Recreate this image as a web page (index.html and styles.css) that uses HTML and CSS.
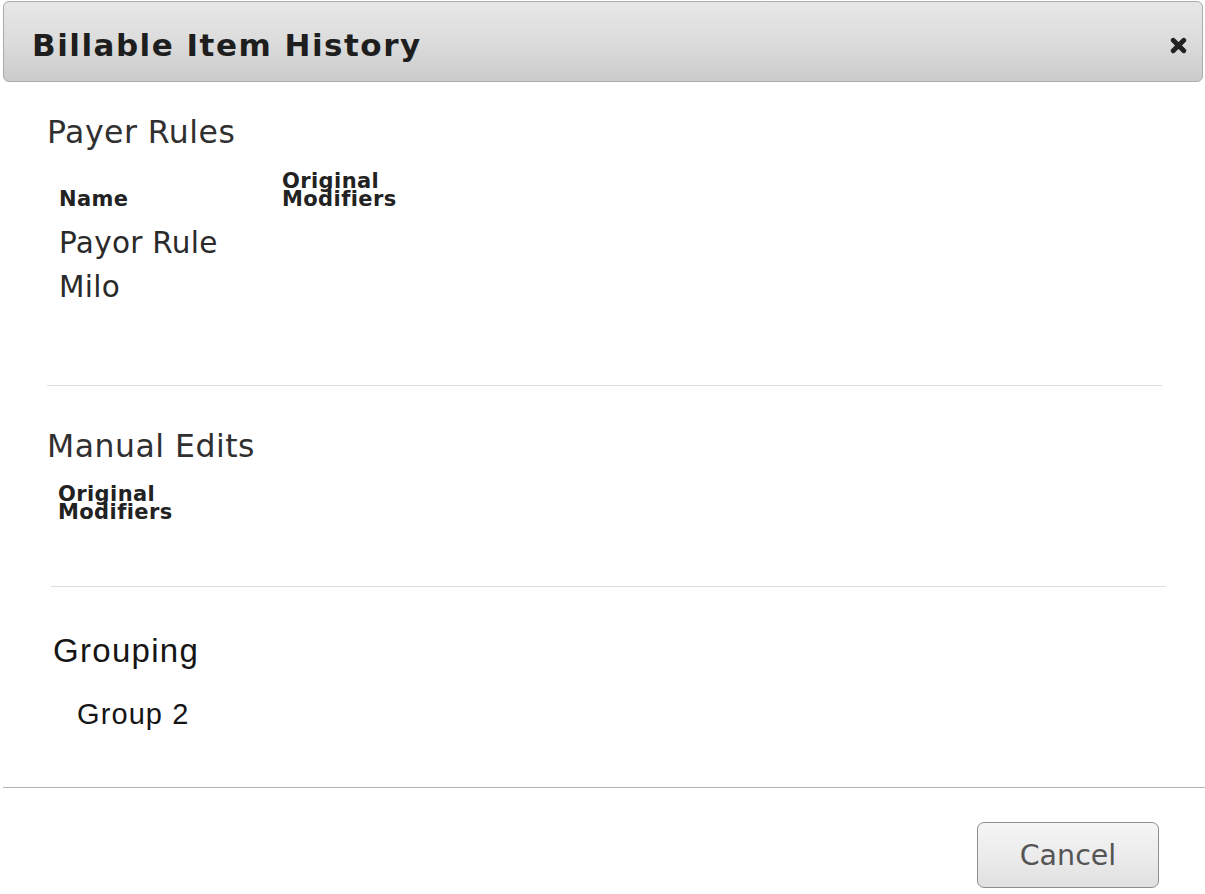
FILE: index.html
```html
<!DOCTYPE html>
<html lang="en">
<head>
<meta charset="utf-8">
<title>Billable Item History</title>
<link rel="stylesheet" href="styles.css">
</head>
<body>
<div class="modal">
  <div class="modal-header">
    <h1 class="modal-title">Billable Item History</h1>
    <button class="close-btn" type="button" aria-label="Close">
      <svg width="17" height="17" viewBox="0 0 17 17" aria-hidden="true">
        <path d="M3.2 3.2 L13.8 13.8 M13.8 3.2 L3.2 13.8" stroke="#222" stroke-width="4.8" stroke-linecap="round" fill="none"/>
      </svg>
    </button>
  </div>
  <div class="modal-body">
    <section class="section">
      <h2 class="section-title">Payer Rules</h2>
      <table class="history-table payer-table">
        <colgroup><col class="col-name"><col class="col-mod"></colgroup>
        <thead>
          <tr><th>Name</th><th>Original Modifiers</th></tr>
        </thead>
        <tbody>
          <tr><td>Payor Rule Milo</td><td></td></tr>
        </tbody>
      </table>
    </section>
    <div class="divider divider-first"></div>
    <section class="section">
      <h2 class="section-title manual-title">Manual Edits</h2>
      <table class="history-table manual-table">
        <colgroup><col class="col-mod"></colgroup>
        <thead>
          <tr><th>Original Modifiers</th></tr>
        </thead>
      </table>
    </section>
    <div class="divider divider-second"></div>
    <section class="section grouping">
      <h3 class="grouping-title">Grouping</h3>
      <div class="group-value">Group 2</div>
    </section>
  </div>
  <div class="modal-footer">
    <button class="btn" type="button">Cancel</button>
  </div>
</div>
</body>
</html>
```

FILE: styles.css
```css
* {
  box-sizing: border-box;
}

html, body {
  margin: 0;
  padding: 0;
  background: #ffffff;
}

body {
  font-family: "DejaVu Sans", Verdana, sans-serif;
  color: #2a2a2a;
  overflow: hidden;
}

.modal {
  margin: 1px 0 0 3px;
  width: 1202px;
  display: flex;
  flex-direction: column;
}

.modal-header {
  height: 81px;
  margin-right: 2px;
  border: 1px solid #ababab;
  border-radius: 6px;
  background: linear-gradient(to bottom, #e7e7e7 0%, #dcdcdc 50%, #cbcbcb 100%);
  display: flex;
  align-items: flex-start;
  justify-content: space-between;
  padding: 0 15px 0 28px;
}

.modal-title {
  margin: 25px 0 0 0;
  font-size: 31px;
  line-height: 36px;
  font-weight: bold;
  letter-spacing: 1.5px;
  color: #1e1e1e;
}

.close-btn {
  margin-top: 35px;
  padding: 0;
  border: 0;
  background: transparent;
  width: 17px;
  height: 17px;
  display: block;
  cursor: pointer;
}

.close-btn svg {
  display: block;
}

.modal-body {
  display: flex;
  flex-direction: column;
}

.section {
  display: flex;
  flex-direction: column;
}

.section-title {
  margin: 31px 0 0 44px;
  font-size: 31.5px;
  line-height: 38px;
  font-weight: normal;
  letter-spacing: 0.5px;
  color: #303030;
}

.manual-title {
  margin-top: 41px;
}

.history-table {
  border-collapse: collapse;
  table-layout: fixed;
  margin-top: 21px;
}

.payer-table {
  margin-left: 56px;
  width: 353px;
}

.manual-table {
  margin-left: 55px;
  margin-top: 20px;
  width: 130px;
}

.col-name {
  width: 223px;
}

.col-mod {
  width: 130px;
}

.history-table th {
  padding: 0;
  text-align: left;
  vertical-align: bottom;
  font-size: 21px;
  line-height: 18px;
  font-weight: bold;
  letter-spacing: 0.4px;
  color: #222;
}

.payer-table thead tr {
  height: 36px;
}

.history-table td {
  padding: 13px 0 0 0;
  vertical-align: top;
  font-size: 29.5px;
  line-height: 44px;
  letter-spacing: 0.3px;
  color: #2a2a2a;
}

.divider {
  height: 0;
  border-top: 1px solid #dedede;
}

.divider-first {
  margin: 76px 43px 0 44px;
}

.divider-second {
  margin: 65px 39px 0 48px;
}

.grouping {
  font-family: "Liberation Sans", Arial, sans-serif;
  color: #151515;
}

.grouping-title {
  margin: 45px 0 0 50px;
  font-size: 33px;
  line-height: 38px;
  font-weight: normal;
  letter-spacing: 1.3px;
}

.group-value {
  margin: 27px 0 0 74px;
  font-size: 29px;
  line-height: 34px;
  letter-spacing: 1.1px;
}

.modal-footer {
  margin-top: 56px;
  border-top: 1px solid #b3b3b3;
  padding: 34px 46px 0 0;
  display: flex;
  justify-content: flex-end;
}

.btn {
  width: 182px;
  height: 66px;
  border: 1px solid #8e8e8e;
  border-radius: 7px;
  background: linear-gradient(to bottom, #f5f5f5 0%, #ececec 50%, #e0e0e0 100%);
  font-family: "DejaVu Sans", Verdana, sans-serif;
  font-size: 28.5px;
  color: #555;
  padding: 0;
  cursor: pointer;
}
```
